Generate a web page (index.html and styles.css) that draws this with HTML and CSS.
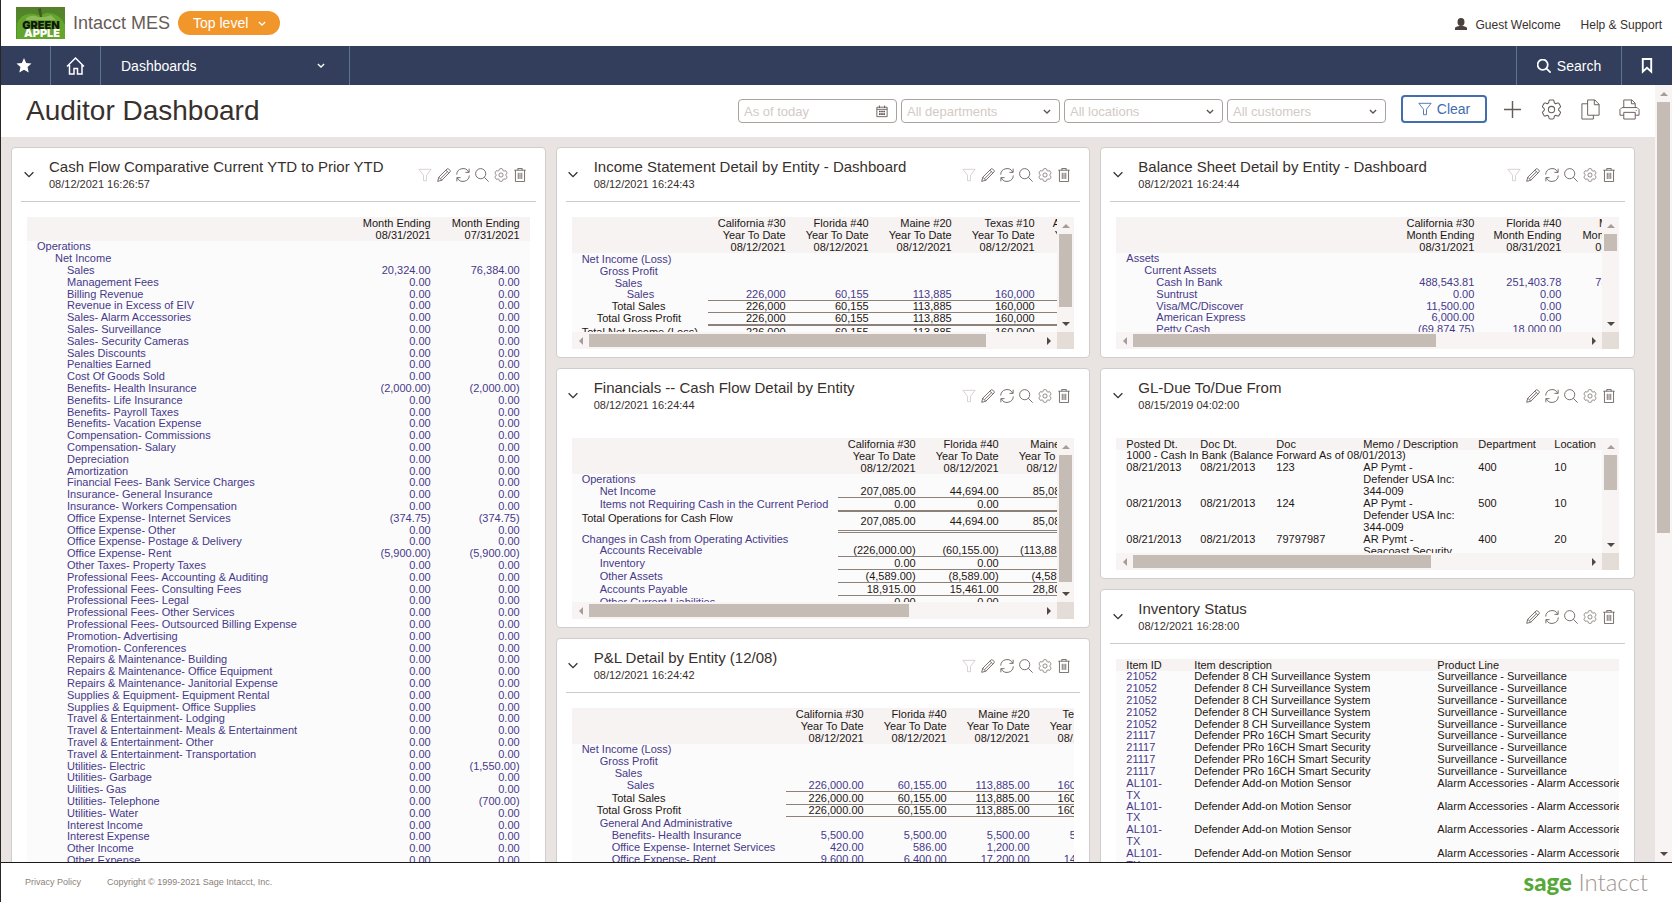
FILE: index.html
```html
<!DOCTYPE html>
<html lang="en">
<head>
  <meta charset="UTF-8" />
  <meta name="viewport" content="width=device-width, initial-scale=1.0" />
  <title>Auditor Dashboard</title>
  <link rel="stylesheet" href="styles.css">
</head>
<body>
  <!-- Icon set -->
  <svg class="sprite" aria-hidden="true">
    <symbol id="i-down" viewBox="0 0 12 8"><path d="M1 1.5l5 5 5-5"/></symbol>
    <symbol id="i-filter" viewBox="0 0 16 16"><path d="M1 1.5h14L9.7 8.3v6.2H6.3V8.3z"/></symbol>
    <symbol id="i-edit" viewBox="0 0 16 16"><path d="M.8 15.2l1.200-4.700L11.400 1.200a1.400 1.400 0 0 1 2 0l1.400 1.400a1.400 1.400 0 0 1 0 2L5.500 14zM10.200 2.500l3.300 3.300M2 10.500L5.500 14M12 4.300L4 12.200"/></symbol>
    <symbol id="i-refresh" viewBox="0 0 16 16"><path d="M.8 7.500A7.200 7.200 0 0 1 14.500 4.800M15.200 8.500A7.200 7.200 0 0 1 1.500 11.200M15 .8v4.200h-4.200M1 15.200V11h4.200"/></symbol>
    <symbol id="i-search" viewBox="0 0 16 16"><circle cx="6.500" cy="6.500" r="5.800"/><path d="M10.600 10.600l5 5"/></symbol>
    <symbol id="i-gear" viewBox="2 2 20 20"><path d="M9.594 3.940c.090-.542.560-.940 1.110-.940h2.593c.550 0 1.020.398 1.110.940l.213 1.281c.063.374.313.686.645.870.074.040.147.083.220.127.325.196.720.257 1.075.124l1.217-.456a1.125 1.125 0 0 1 1.370.490l1.296 2.247a1.125 1.125 0 0 1-.260 1.431l-1.003.827c-.293.241-.438.613-.430.992a7.723 7.723 0 0 1 0 .255c-.008.378.137.750.430.991l1.004.827c.424.350.534.955.260 1.430l-1.298 2.247a1.125 1.125 0 0 1-1.369.491l-1.217-.456c-.355-.133-.750-.072-1.076.124a6.470 6.470 0 0 1-.220.128c-.331.183-.581.495-.644.869l-.213 1.281c-.090.543-.560.940-1.110.940h-2.594c-.550 0-1.019-.398-1.110-.940l-.213-1.281c-.062-.374-.312-.686-.644-.870a6.520 6.520 0 0 1-.220-.127c-.325-.196-.720-.257-1.076-.124l-1.217.456a1.125 1.125 0 0 1-1.369-.490l-1.297-2.247a1.125 1.125 0 0 1 .260-1.431l1.004-.827c.292-.240.437-.613.430-.991a6.932 6.932 0 0 1 0-.255c.007-.380-.138-.751-.430-.992l-1.004-.827a1.125 1.125 0 0 1-.260-1.430l1.297-2.247a1.125 1.125 0 0 1 1.370-.491l1.216.456c.356.133.751.072 1.076-.124.072-.044.146-.086.220-.128.332-.183.582-.495.644-.869z"/><circle cx="12" cy="12" r="3"/></symbol>
    <symbol id="i-trash" viewBox="0 0 16 16"><path d="M1.500 2.500h13M5.500 2.500V.5h5v2M2.800 2.500v13h10.400v-13M6 5.500v7M8 5.500v7M10 5.500v7"/></symbol>
    <symbol id="i-plus" viewBox="0 0 18 18"><path d="M9 0v18M0 9h18" stroke-width="1.500"/></symbol>
    <symbol id="i-copy" viewBox="0 0 20 22"><path d="M7 1h7.500L19 5.500V17H7zM14 1v5h5M7 5H1v16h12v-4"/></symbol>
    <symbol id="i-print" viewBox="0 0 22 22"><path d="M5 9V1h8.500L17 4.500V9M13 1v4h4M5 17H1v-6l2-2h16l2 2v6h-4M5 14h12v7H5zM17.500 12h1"/></symbol>
    <symbol id="i-calendar" viewBox="0 0 14 14"><path d="M1 2h12v11H1zM1 4.500h12M4 0v3M10 0v3"/><path d="M3.500 7h7M3.500 10h7" stroke-width="2" stroke-dasharray="2 .5"/></symbol>
    <symbol id="i-up-arrow" viewBox="0 0 8 4"><path d="M0 4l4-4 4 4z"/></symbol>
    <symbol id="i-down-arrow" viewBox="0 0 8 4"><path d="M0 0l4 4 4-4z"/></symbol>
    <symbol id="i-left-arrow" viewBox="0 0 4 8"><path d="M4 0L0 4l4 4z"/></symbol>
    <symbol id="i-right-arrow" viewBox="0 0 4 8"><path d="M0 0l4 4-4 4z"/></symbol>
  </svg>

  <header class="topbar">
    <svg class="company-logo" viewBox="0 0 49 32" role="img" aria-label="Green Apple">
      <defs>
        <linearGradient id="leaf" x1="0" y1="0" x2="0" y2="1"><stop offset="0" stop-color="#557f2c"/><stop offset="1" stop-color="#4b9a22"/></linearGradient>
      </defs>
      <rect width="49" height="32" fill="url(#leaf)"/>
      <path d="M1 32V17Q5 5 19 7q5 3 11-1 13-1 19 12v14z" fill="#64a52d"/>
      <path d="M10 11q7-4 12-1 6 1 13-2l5 5H10z" fill="#8cbb58"/>
      <path d="M22 2l2 8h2l-1-9z" fill="#3f5820"/>
      <text x="25" y="22" class="logo-green">GREEN</text>
      <text x="26" y="30" class="logo-apple">APPLE</text>
    </svg>
    <span class="company">Intacct MES</span>
    <button class="level" type="button">Top level <svg class="icon"><use href="#i-down"/></svg></button>
    <div class="account">
      <a href="#"><svg class="person" viewBox="0 0 12 12"><ellipse cx="6" cy="4" rx="3.500" ry="4"/><path d="M0 12v-2q0-1 4-2h4q4 1 4 2v2z"/></svg>Guest Welcome</a>
      <a href="#">Help &amp; Support</a>
    </div>
  </header>

  <nav class="nav">
    <a class="nav-cell nav-star" href="#" aria-label="Favorites"><svg class="star" viewBox="0 0 16 16"><path d="M8 0l2.300 5.200 5.700.6-4.200 3.900 1.200 5.800L8 12.600l-5 2.900 1.200-5.800L0 5.800l5.700-.6z"/></svg></a>
    <a class="nav-cell" href="#" aria-label="Home"><svg class="icon home" viewBox="0 0 19 18"><path d="M1 9.500L9.500 1 18 9.500M3.500 8v9H8v-5.500h3.500V17H16V8"/></svg></a>
    <a class="nav-cell nav-menu" href="#">Dashboards <svg class="icon"><use href="#i-down"/></svg></a>
    <a class="nav-cell nav-search" href="#"><svg class="icon"><use href="#i-search"/></svg>Search</a>
    <a class="nav-cell nav-mark" href="#" aria-label="Bookmarks"><svg class="icon" viewBox="0 0 12 16"><path d="M1.500 1h9v13.500L6 10.500l-4.500 4z"/></svg></a>
  </nav>

  <div class="workspace">
    <main class="page">
      <div class="page-head">
        <h1>Auditor Dashboard</h1>
        <form class="filters">
          <label class="field"><input type="text" placeholder="As of today" aria-label="As of date"><svg class="icon cal"><use href="#i-calendar"/></svg></label>
          <label class="field"><select aria-label="Department"><option>All departments</option></select><svg class="icon"><use href="#i-down"/></svg></label>
          <label class="field"><select aria-label="Location"><option>All locations</option></select><svg class="icon"><use href="#i-down"/></svg></label>
          <label class="field"><select aria-label="Customer"><option>All customers</option></select><svg class="icon"><use href="#i-down"/></svg></label>
          <button class="clear" type="button"><svg class="icon"><use href="#i-filter"/></svg>Clear</button>
        </form>
        <div class="page-tools">
          <button type="button" aria-label="Add"><svg class="icon"><use href="#i-plus"/></svg></button>
          <button type="button" aria-label="Settings"><svg class="icon"><use href="#i-gear"/></svg></button>
          <button type="button" aria-label="Copy"><svg class="icon"><use href="#i-copy"/></svg></button>
          <button type="button" aria-label="Print"><svg class="icon"><use href="#i-print"/></svg></button>
        </div>
      </div>

      <div class="board">
        <div class="column">
          <section class="card" data-filter="yes">
            <div class="card-head"><div><h2>Cash Flow Comparative Current YTD to Prior YTD</h2><p>08/12/2021 16:26:57</p></div></div>
            <div class="view">
              <table class="report fill tight" id="cash-flow">
                <colgroup><col><col class="w-89"><col class="w-89"></colgroup>
                <thead><tr><th></th><th>Month Ending<br>08/31/2021</th><th>Month Ending<br>07/31/2021</th></tr></thead>
                <tbody></tbody>
              </table>
            </div>
          </section>
        </div>

        <div class="column">
          <section class="card" data-filter="yes">
            <div class="card-head"><div><h2>Income Statement Detail by Entity - Dashboard</h2><p>08/12/2021 16:24:43</p></div></div>
            <div class="view scroll short" data-v="90" data-h="88">
              <table class="report dense" id="income">
                <colgroup><col class="w-136"><col class="w-83"><col class="w-83"><col class="w-83"><col class="w-83"><col class="w-83"></colgroup>
                <thead><tr><th></th><th>California #30<br>Year To Date<br>08/12/2021</th><th>Florida #40<br>Year To Date<br>08/12/2021</th><th>Maine #20<br>Year To Date<br>08/12/2021</th><th>Texas #10<br>Year To Date<br>08/12/2021</th><th>Alabama #50<br>Year To Date<br>08/12/2021</th></tr></thead>
                <tbody></tbody>
              </table>
            </div>
          </section>

          <section class="card plain" data-filter="yes">
            <div class="card-head"><div><h2>Financials -- Cash Flow Detail by Entity</h2><p>08/12/2021 16:24:44</p></div></div>
            <div class="view scroll tall" data-v="98" data-h="71">
              <table class="report tight" id="financials">
                <colgroup><col class="w-266"><col class="w-83"><col class="w-83"><col class="w-83"></colgroup>
                <thead><tr><th></th><th>California #30<br>Year To Date<br>08/12/2021</th><th>Florida #40<br>Year To Date<br>08/12/2021</th><th>Maine #20<br>Year To Date<br>08/12/2021</th></tr></thead>
                <tbody></tbody>
              </table>
            </div>
          </section>

          <section class="card" data-filter="yes">
            <div class="card-head"><div><h2>P&amp;L Detail by Entity (12/08)</h2><p>08/12/2021 16:24:42</p></div></div>
            <div class="view">
              <table class="report tight" id="pl">
                <colgroup><col class="w-214"><col class="w-83"><col class="w-83"><col class="w-83"><col class="w-83"></colgroup>
                <thead><tr><th></th><th>California #30<br>Year To Date<br>08/12/2021</th><th>Florida #40<br>Year To Date<br>08/12/2021</th><th>Maine #20<br>Year To Date<br>08/12/2021</th><th>Texas #10<br>Year To Date<br>08/12/2021</th></tr></thead>
                <tbody></tbody>
              </table>
            </div>
          </section>
        </div>

        <div class="column">
          <section class="card" data-filter="yes">
            <div class="card-head"><div><h2>Balance Sheet Detail by Entity - Dashboard</h2><p>08/12/2021 16:24:44</p></div></div>
            <div class="view scroll short" data-v="21" data-h="67">
              <table class="report tight" id="balance">
                <colgroup><col class="w-276"><col class="w-87"><col class="w-87"><col class="w-89"></colgroup>
                <thead><tr><th></th><th>California #30<br>Month Ending<br>08/31/2021</th><th>Florida #40<br>Month Ending<br>08/31/2021</th><th>Maine #20<br>Month Ending<br>08/31/2021</th></tr></thead>
                <tbody></tbody>
              </table>
            </div>
          </section>

          <section class="card plain">
            <div class="card-head"><div><h2>GL-Due To/Due From</h2><p>08/15/2019 04:02:00</p></div></div>
            <div class="view scroll short" data-v="43" data-h="66">
              <table class="report list tight">
                <colgroup><col class="w-84"><col class="w-76"><col class="w-87"><col class="w-115"><col class="w-76"><col class="w-83"></colgroup>
                <thead><tr><th>Posted Dt.</th><th>Doc Dt.</th><th>Doc</th><th>Memo / Description</th><th>Department</th><th>Location</th></tr></thead>
                <tbody>
                  <tr><td colspan="6">1000 - Cash In Bank (Balance Forward As of 08/01/2013)</td></tr>
                  <tr><td>08/21/2013</td><td>08/21/2013</td><td>123</td><td>AP Pymt -<br>Defender USA Inc:<br>344-009</td><td>400</td><td>10</td></tr>
                  <tr><td>08/21/2013</td><td>08/21/2013</td><td>124</td><td>AP Pymt -<br>Defender USA Inc:<br>344-009</td><td>500</td><td>10</td></tr>
                  <tr><td>08/21/2013</td><td>08/21/2013</td><td>79797987</td><td>AR Pymt -<br>Seacoast Security</td><td>400</td><td>20</td></tr>
                </tbody>
              </table>
            </div>
          </section>

          <section class="card">
            <div class="card-head"><div><h2>Inventory Status</h2><p>08/12/2021 16:28:00</p></div></div>
            <div class="view">
              <table class="report list tight" id="inventory">
                <colgroup><col class="w-78"><col class="w-243"><col class="w-243"></colgroup>
                <thead><tr><th>Item ID</th><th>Item description</th><th>Product Line</th></tr></thead>
                <tbody></tbody>
              </table>
            </div>
          </section>
        </div>
      </div>
    </main>
    <div class="vbar main-bar" aria-hidden="true"><svg class="dim"><use href="#i-up-arrow"/></svg><div class="track"><div class="thumb" style="height:58%"></div></div><svg><use href="#i-down-arrow"/></svg></div>
  </div>

  <footer class="footer">
    <a href="#">Privacy Policy</a>
    <span>Copyright © 1999-2021 Sage Intacct, Inc.</span>
    <div class="brand"><b>sage</b> Intacct</div>
  </footer>

  <script src="reports.js"></script>
</body>
</html>
```
FILE: reports.js
```js
// row: [indent, row class, label, ...values]
const REPORTS = {
  'cash-flow': [
    [10, 'link', 'Operations', '', ''],
    [28, 'link', 'Net Income', '', ''],
    ...[
      ['Sales', '20,324.00', '76,384.00'],
      ['Management Fees'], ['Billing Revenue'], ['Revenue in Excess of EIV'],
      ['Sales- Alarm Accessories'], ['Sales- Surveillance'], ['Sales- Security Cameras'],
      ['Sales Discounts'], ['Penalties Earned'], ['Cost Of Goods Sold'],
      ['Benefits- Health Insurance', '(2,000.00)', '(2,000.00)'],
      ['Benefits- Life Insurance'], ['Benefits- Payroll Taxes'], ['Benefits- Vacation Expense'],
      ['Compensation- Commissions'], ['Compensation- Salary'], ['Depreciation'], ['Amortization'],
      ['Financial Fees- Bank Service Charges'], ['Insurance- General Insurance'],
      ['Insurance- Workers Compensation'],
      ['Office Expense- Internet Services', '(374.75)', '(374.75)'],
      ['Office Expense- Other'], ['Office Expense- Postage & Delivery'],
      ['Office Expense- Rent', '(5,900.00)', '(5,900.00)'],
      ['Other Taxes- Property Taxes'], ['Professional Fees- Accounting & Auditing'],
      ['Professional Fees- Consulting Fees'], ['Professional Fees- Legal'],
      ['Professional Fees- Other Services'], ['Professional Fees- Outsourced Billing Expense'],
      ['Promotion- Advertising'], ['Promotion- Conferences'],
      ['Repairs & Maintenance- Building'], ['Repairs & Maintenance- Office Equipment'],
      ['Repairs & Maintenance- Janitorial Expense'], ['Supplies & Equipment- Equipment Rental'],
      ['Supplies & Equipment- Office Supplies'], ['Travel & Entertainment- Lodging'],
      ['Travel & Entertainment- Meals & Entertainment'], ['Travel & Entertainment- Other'],
      ['Travel & Entertainment- Transportation'],
      ['Utilities- Electric', '0.00', '(1,550.00)'],
      ['Utilities- Garbage'], ['Uilities- Gas'],
      ['Utilities- Telephone', '0.00', '(700.00)'],
      ['Utilities- Water'], ['Interest Income'], ['Interest Expense'],
      ['Other Income'], ['Other Expense']
    ].map(([label, a = '0.00', b = '0.00']) => [40, 'link', label, a, b])
  ],
  income: [
    [10, 'link', 'Net Income (Loss)', '', '', '', '', ''],
    [28, 'link', 'Gross Profit', '', '', '', '', ''],
    [43, 'link', 'Sales', '', '', '', '', ''],
    [55, 'link line', 'Sales', '226,000', '60,155', '113,885', '160,000', '0'],
    [40, 'line', 'Total Sales', '226,000', '60,155', '113,885', '160,000', '0'],
    [25, 'thick', 'Total Gross Profit', '226,000', '60,155', '113,885', '160,000', '0'],
    [10, '', 'Total Net Income (Loss)', '226,000', '60,155', '113,885', '160,000', '0']
  ],
  financials: [
    [10, 'link', 'Operations', '', '', ''],
    [28, 'label-link line', 'Net Income', '207,085.00', '44,694.00', '85,085.00'],
    [28, 'label-link thick', 'Items not Requiring Cash in the Current Period', '0.00', '0.00', '0.00'],
    [10, 'double', 'Total Operations for Cash Flow', '207,085.00', '44,694.00', '85,085.00'],
    [10, 'link', 'Changes in Cash from Operating Activities', '', '', ''],
    [28, 'label-link line', 'Accounts Receivable', '(226,000.00)', '(60,155.00)', '(113,885.00)'],
    [28, 'label-link line', 'Inventory', '0.00', '0.00', '0.00'],
    [28, 'label-link line', 'Other Assets', '(4,589.00)', '(8,589.00)', '(4,589.00)'],
    [28, 'label-link line', 'Accounts Payable', '18,915.00', '15,461.00', '28,800.00'],
    [28, 'label-link line', 'Other Current Liabilities', '0.00', '0.00', '0.00']
  ],
  pl: [
    [10, 'link', 'Net Income (Loss)', '', '', '', ''],
    [28, 'link', 'Gross Profit', '', '', '', ''],
    [43, 'link', 'Sales', '', '', '', ''],
    [55, 'link line', 'Sales', '226,000.00', '60,155.00', '113,885.00', '160,000.00'],
    [40, 'line', 'Total Sales', '226,000.00', '60,155.00', '113,885.00', '160,000.00'],
    [25, 'line', 'Total Gross Profit', '226,000.00', '60,155.00', '113,885.00', '160,000.00'],
    [28, 'link', 'General And Administrative', '', '', '', ''],
    [40, 'link', 'Benefits- Health Insurance', '5,500.00', '5,500.00', '5,500.00', '5,500.00'],
    [40, 'link', 'Office Expense- Internet Services', '420.00', '586.00', '1,200.00', '560.00'],
    [40, 'link', 'Office Expense- Rent', '9,600.00', '6,400.00', '17,200.00', '14,400.00']
  ],
  balance: [
    [10, 'link', 'Assets', '', '', ''],
    [28, 'link', 'Current Assets', '', '', ''],
    [40, 'link', 'Cash In Bank', '488,543.81', '251,403.78', '785,543.81'],
    [40, 'link', 'Suntrust', '0.00', '0.00', '0.00'],
    [40, 'link', 'Visa/MC/Discover', '11,500.00', '0.00', '0.00'],
    [40, 'link', 'American Express', '6,000.00', '0.00', '0.00'],
    [40, 'link', 'Petty Cash', '(69,874.75)', '18,000.00', '0.00']
  ],
  inventory: [
    ...Array(5).fill([10, 'label-link', '21052', 'Defender 8 CH Surveillance System', 'Surveillance - Surveillance']),
    ...Array(4).fill([10, 'label-link', '21117', 'Defender PRo 16CH Smart Security', 'Surveillance - Surveillance']),
    ...Array(4).fill([10, 'label-link', 'AL101-\nTX', 'Defender Add-on Motion Sensor', 'Alarm Accessories - Alarm Accessories'])
  ]
};

function fillCell(cell, text, linked) {
  if (!linked || !text) {
    cell.textContent = text;
    return;
  }
  const a = document.createElement('a');
  a.href = '#';
  a.textContent = text;
  cell.append(a);
}

for (const [id, rows] of Object.entries(REPORTS)) {
  const body = document.querySelector(`#${id} tbody`);
  rows.forEach(([indent, cls, label, ...values]) => {
    const tr = body.insertRow();
    tr.className = cls;
    const first = tr.insertCell();
    first.className = `indent-${indent}`;
    fillCell(first, label, cls.includes('link'));
    values.forEach(v => fillCell(tr.insertCell(), v, cls.startsWith('link')));
  });
}

const svg = name => `<svg class="icon"><use href="#i-${name}"/></svg>`;
const button = (name, label) =>
  `<button type="button" class="tool-${name}" aria-label="${label}">${svg(name)}</button>`;

// collapse arrow and toolbar of each card
document.querySelectorAll('.card').forEach(card => {
  const head = card.querySelector('.card-head');
  head.insertAdjacentHTML('afterbegin', button('down', 'Collapse'));
  head.insertAdjacentHTML('beforeend', `<div class="tools">${card.dataset.filter ? button('filter', 'Filter') : ''}${button('edit', 'Edit')}${button('refresh', 'Refresh')}${button('search', 'View')}${button('gear', 'Settings')}${button('trash', 'Remove')}</div>`);
});

// scroll bars, thumb sizes are in percent of the track
document.querySelectorAll('.scroll').forEach(view => {
  const pane = document.createElement('div');
  pane.className = 'pane';
  pane.append(...view.childNodes);
  view.append(pane);
  view.insertAdjacentHTML('beforeend', `
    <div class="vbar"><svg class="dim"><use href="#i-up-arrow"/></svg><div class="track"><div class="thumb" style="height:${view.dataset.v}%"></div></div><svg><use href="#i-down-arrow"/></svg></div>
    <div class="hbar"><svg class="dim"><use href="#i-left-arrow"/></svg><div class="track"><div class="thumb" style="width:${view.dataset.h}%"></div></div><svg><use href="#i-right-arrow"/></svg></div>
    <div class="corner"></div>`);
});
```
FILE: styles.css
```css
* {
  box-sizing: border-box;
}

body {
  margin: 0;
  height: 100vh;
  display: flex;
  flex-direction: column;
  overflow: hidden;
  border-left: 1px solid #2b2625;
  background: #fff;
  color: #38302d;
  font-family: "Liberation Sans", Arial, sans-serif;
  font-size: 14px;
}

a {
  color: inherit;
  text-decoration: none;
}

button {
  padding: 0;
  border: 0;
  background: none;
  color: inherit;
  font: inherit;
  cursor: pointer;
}

.sprite {
  position: absolute;
  width: 0;
  height: 0;
}

.icon {
  display: block;
  fill: none;
  stroke: currentColor;
  overflow: visible;
}

/* Top bar */
.topbar {
  display: flex;
  align-items: center;
  height: 46px;
  flex: none;
  padding: 0 10px 0 15px;
}

.company-logo {
  width: 49px;
  height: 32px;
}

.logo-green,
.logo-apple {
  font-family: Inter, "Liberation Sans", sans-serif;
  font-size: 11px;
  font-weight: 900;
  text-anchor: middle;
}

.logo-green { fill: #12180b; }
.logo-apple { fill: #fff; }

.company {
  margin: 0 8px;
  font-size: 18px;
  color: #665c58;
}

.level {
  display: flex;
  align-items: center;
  justify-content: space-between;
  width: 102px;
  height: 24px;
  padding: 0 14px 0 15px;
  border-radius: 12px;
  background: #f0962b;
  color: #fff;
}

.level .icon {
  width: 8px;
  height: 5px;
  stroke-width: 2;
}

.account {
  display: flex;
  gap: 20px;
  margin-left: auto;
  padding-top: 4px;
  font-size: 12px;
}

.person {
  width: 12px;
  height: 12px;
  margin-right: 8px;
  vertical-align: -1px;
  fill: #4a403c;
}

/* Navigation */
.nav {
  display: flex;
  flex: none;
  height: 39px;
  background: #333e5c;
  color: #fff;
}

.nav-cell {
  display: flex;
  align-items: center;
  justify-content: center;
  width: 50px;
  border-right: 1px solid #5b7693;
}

.nav-star { padding-right: 3px; }

.star {
  width: 16px;
  height: 15px;
  fill: #fff;
}

.home {
  width: 19px;
  height: 18px;
  stroke-width: 1.5;
}

.nav-menu {
  width: 249px;
  padding: 0 24px 0 20px;
  justify-content: space-between;
}

.nav-menu .icon {
  width: 8px;
  height: 5px;
  stroke-width: 2;
}

.nav-search {
  width: 106px;
  gap: 6px;
  margin-left: auto;
  border-left: 1px solid #5b7693;
}

.nav-search .icon {
  width: 14px;
  height: 14px;
  stroke-width: 2;
}

.nav-mark { border-right: 0; }

.nav-mark .icon {
  width: 12px;
  height: 15px;
  stroke-width: 2;
}

/* Page */
.workspace {
  flex: 1;
  min-height: 0;
  display: grid;
  grid-template-columns: minmax(0, 1fr) 17px;
  grid-template-rows: minmax(0, 1fr);
}

.page {
  overflow: hidden;
  background: #e9e4e1;
}

.page-head {
  display: flex;
  align-items: center;
  height: 52px;
  padding: 0 15px 0 25px;
  background: #fff;
}

h1 {
  flex: 1;
  margin: 0;
  font-size: 28px;
  font-weight: normal;
  line-height: 48px;
}

.filters {
  display: flex;
  align-items: center;
  gap: 4px;
}

.field {
  display: flex;
  align-items: center;
  width: 159px;
  height: 24px;
  padding-right: 8px;
  border: 1px solid #a9a29f;
  border-radius: 4px;
  color: #5d534f;
}

.field input,
.field select {
  flex: 1;
  min-width: 0;
  padding: 0 0 0 5px;
  border: 0;
  outline: 0;
  background: none;
  appearance: none;
  color: #d3cac5;
  font: inherit;
  font-size: 13px;
}

.field input::placeholder {
  color: #d3cac5;
}

.field .icon {
  width: 8px;
  height: 5px;
  stroke-width: 2;
}

.field .cal {
  width: 12px;
  height: 13px;
  stroke-width: 1;
}

.clear {
  display: flex;
  align-items: center;
  justify-content: center;
  gap: 5px;
  width: 86px;
  height: 28px;
  margin: 0 14px 5px 11px;
  border: 2px solid #426dae;
  border-radius: 4px;
  color: #426dae;
}

.clear .icon {
  width: 14px;
  height: 14px;
}

.page-tools {
  display: flex;
  gap: 17px;
  padding-bottom: 3px;
  color: #665c58;
}

.page-tools button {
  display: flex;
  align-items: center;
  justify-content: center;
  width: 22px;
  height: 24px;
}

.page-tools .icon {
  width: 21px;
  height: 21px;
}

.page-tools button:first-child .icon {
  width: 17px;
  height: 17px;
}

/* Board */
.board {
  display: grid;
  grid-template-columns: repeat(3, minmax(0, 1fr));
  align-items: start;
  gap: 10px;
  padding: 10px 20px 0 10px;
}

.column {
  display: grid;
  grid-template-columns: minmax(0, 1fr);
  gap: 10px;
}

.card {
  padding: 0 9px 8px;
  border: 1px solid #d0cecd;
  border-radius: 4px;
  background: #fff;
}

.card-head {
  display: flex;
  align-items: center;
  height: 54px;
  padding-right: 8px;
  border-bottom: 1px solid #cdcbca;
}

.card.plain .card-head {
  border-color: transparent;
}

.card-head > div:first-of-type {
  flex: 1;
}

h2,
p {
  margin: 0;
  font-weight: normal;
}

h2 {
  font-size: 15px;
  line-height: 18px;
}

p {
  font-size: 11px;
  line-height: 16px;
}

.tools {
  display: flex;
  gap: 3px;
  color: #665c58;
}

.tools button {
  display: flex;
  justify-content: center;
  width: 16px;
}

.tools .icon {
  width: 14px;
  height: 14px;
}

.tools .tool-filter { color: #d3cdc9; }

.tool-down {
  width: 14px;
  margin-right: 14px;
  padding-left: 1px;
}

.tool-down .icon {
  width: 12px;
  height: 7px;
  margin: auto;
  stroke-width: 1.5;
}

.view {
  margin: 15px 6px 0;
  overflow: hidden;
  background: #fcfbfb;
}

.scroll {
  display: grid;
  grid-template-columns: minmax(0, 1fr) 17px;
  grid-template-rows: minmax(0, 1fr) 17px;
}

.short { height: 132px; }
.tall { height: 181px; }

.pane {
  overflow: hidden;
}

/* Reports */
.report {
  width: max-content;
  border-spacing: 0;
  font-size: 11px;
  line-height: 12px;
  color: #1c1614;
}

.report.fill { width: 100%; }

.report th {
  padding: 0 5px 0 0;
  background: #f6f3f2;
  font-weight: normal;
  text-align: right;
  vertical-align: top;
}

.report td {
  padding: 0 5px 0 0;
  height: 12px;
  text-align: right;
  vertical-align: top;
  white-space: nowrap;
}

.report.fill th,
.report.fill td {
  padding-right: 10px;
}

.report td:first-child,
.report.list th,
.report.list td {
  text-align: left;
}

.report.list th,
.report.list td {
  padding: 0;
  white-space: pre-line;
}

.report.list th:first-child,
.report.list td:first-child {
  padding-left: 10px;
}

.report.list td:last-child { white-space: nowrap; }

.report.tight tbody tr:nth-child(5n + 1) td {
  height: 11px;
  line-height: 11px;
}

.link,
.label-link td:first-child {
  color: #46398a;
}

.line td:not(:first-child) { border-bottom: 1px solid #8c8079; }
.thick td:not(:first-child) { border-bottom: 2px solid #8c8079; }

.dense .line td,
.dense .thick td {
  line-height: 11px;
}

.double td:not(:first-child) {
  height: 21px;
  border-bottom: 3px double #8c8079;
  vertical-align: middle;
}

.report .indent-10 { padding-left: 10px; }
.report .indent-25 { padding-left: 25px; }
.report .indent-28 { padding-left: 28px; }
.report .indent-40 { padding-left: 40px; }
.report .indent-43 { padding-left: 43px; }
.report .indent-55 { padding-left: 55px; }

.w-76 { width: 76px; }
.w-78 { width: 78px; }
.w-83 { width: 83px; }
.w-84 { width: 84px; }
.w-87 { width: 87px; }
.w-89 { width: 89px; }
.w-115 { width: 115px; }
.w-136 { width: 136px; }
.w-214 { width: 214px; }
.w-243 { width: 243px; }
.w-266 { width: 266px; }
.w-276 { width: 276px; }

/* Scroll bars */
.vbar,
.hbar {
  display: flex;
  align-items: center;
  background: #f8f4f3;
}

.vbar { flex-direction: column; }

.vbar svg,
.hbar svg {
  flex: none;
  fill: #514743;
}

.vbar svg {
  width: 8px;
  height: 4px;
  margin: 7px 0 6px;
}

.hbar svg {
  width: 4px;
  height: 8px;
  margin: 0 6px 0 7px;
}

.vbar .dim,
.hbar .dim {
  fill: #a79c97;
}

.track { flex: 1; }

.vbar .track {
  width: 13px;
  min-height: 0;
}

.hbar .track { height: 13px; }

.thumb {
  height: 100%;
  background: #c5bcb6;
}

.corner { background: #e3dcd7; }

/* Footer */
.footer {
  display: flex;
  align-items: center;
  flex: none;
  gap: 26px;
  height: 40px;
  padding: 0 24px 2px;
  border-top: 1px solid #1a1a1a;
  color: #8b7f79;
  font-size: 9px;
}

.brand {
  margin-left: auto;
  color: #a2968f;
  font-family: Lato, sans-serif;
  font-size: 24px;
  font-weight: 300;
}

.brand b {
  color: #56a838;
  font-weight: 900;
}
```
